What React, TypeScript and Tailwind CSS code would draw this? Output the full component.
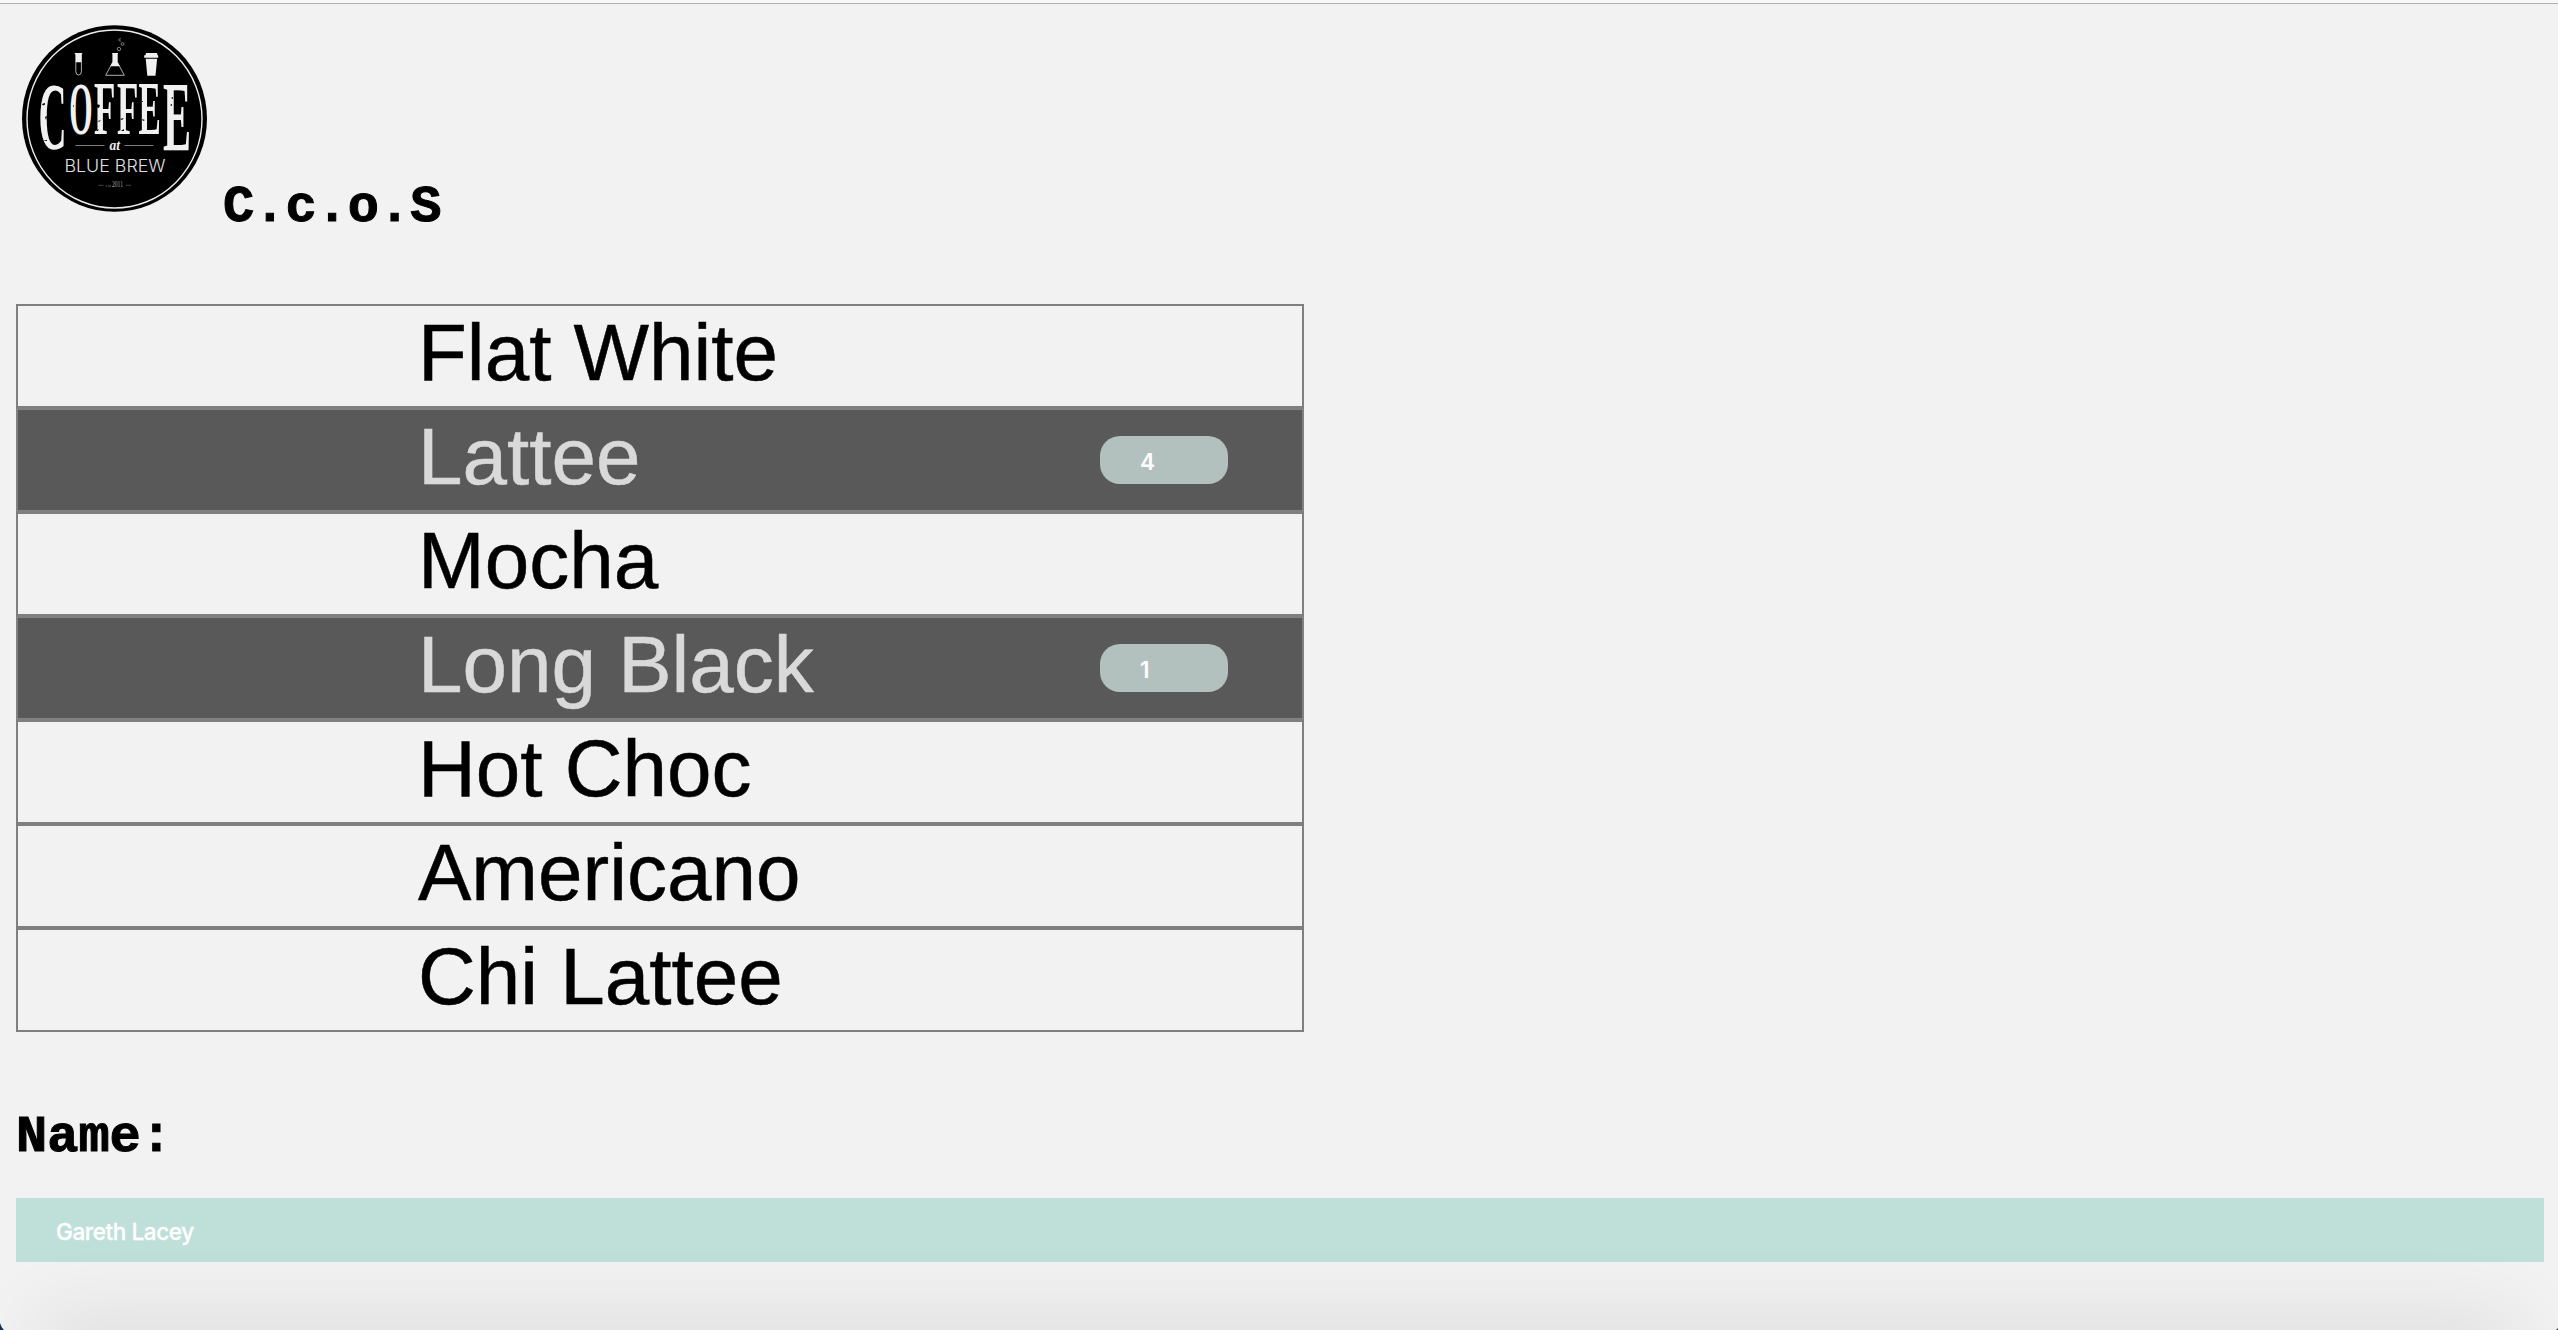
const drinks: { name: string; qty?: number }[] = [
  { name: "Flat White" },
  { name: "Lattee", qty: 4 },
  { name: "Mocha" },
  { name: "Long Black", qty: 1 },
  { name: "Hot Choc" },
  { name: "Americano" },
  { name: "Chi Lattee" },
];

// Condensed letters of the wordmark
const letters = [
  { c: "C", x: 38.6, sx: 0.405, size: 96, y: 149.3 },
  { c: "O", x: 69.3, sx: 0.4, size: 75, y: 134.3 },
  { c: "F", x: 94, sx: 0.46, size: 76, y: 134.3 },
  { c: "F", x: 117, sx: 0.46, size: 76, y: 134.3 },
  { c: "E", x: 138.5, sx: 0.44, size: 76, y: 134.3 },
  { c: "E", x: 163, sx: 0.42, size: 100, y: 150 },
];

function Logo() {
  return (
    <svg className="block h-[200px] w-[200px] shrink-0" viewBox="14 18 200 200" fill="none">
      <ellipse cx="114.5" cy="118.5" rx="92.5" ry="93.3" fill="#000" />
      <ellipse cx="114.5" cy="119" rx="87.5" ry="89" stroke="#ececec" strokeWidth="1.4" />
      <g stroke="#d8d8d8" strokeWidth="0.8">
        <path d="M75.8 54V71.5a2.8 3.5 0 0 0 5.6 0V54" />
        <path d="M112.8 54v8L105.7 75.3h18.6L117.3 62v-8" />
        <g stroke="#999">
          <circle cx="119" cy="49" r="1.7" />
          <circle cx="122.6" cy="44" r="1.4" />
          <path d="M121 39.2a1.2 1.2 0 1 0 0 1.4" />
        </g>
      </g>
      <g fill="#f1f1f1">
        <path d="M74.6 53h7.6v1.2h-.8v8h-5.6v-8h-.8z" />
        <path d="M112.2 53h5.8v1h-.7v8l2.6 4.2h-9.7L112.8 62v-8h-.6z" />
        <path d="M146 53h11l.6 2.2h.6v2.6H144.2v-2.6h1.2z" />
        <path d="M145.7 58.8h11.4l-1.6 17h-8.2z" />
      </g>
      <g fill="#f1f1f1" fontFamily="Liberation Serif, serif" fontWeight="700">
        {letters.map((l, i) => (
          <text key={i} fontSize={l.size} transform={`translate(${l.x} ${l.y}) scale(${l.sx} 1)`}>
            {l.c}
          </text>
        ))}
      </g>
      <path
        d="M42 104l3-1v1.5l-2 1zM45 117l2-1-1 4zM42 141l5-1v1zM96 104l4 1-1 3-3-1zM98 121l3-1-2 2zM120 119l4-1-2 2zM121 131l3-2v2zM141 101h2v1zM142 119l3 1-2 1zM171 98l2-1v2zM170 105l2-1v2zM73 106l1-1v2zM96 131l3-2-1 2z"
        fill="#000"
      />
      <path d="M75.5 145.5H104.5M124.5 145.5H153.5" stroke="#8a8a8a" strokeWidth="0.9" />
      <path d="M98.5 185.3h5M126 185.3h5" stroke="#555" strokeWidth="0.8" />
      <text x="109.5" y="150" fill="#f1f1f1" fontFamily="Liberation Serif, serif" fontStyle="italic" fontWeight="700" fontSize="15" textLength="10.5" lengthAdjust="spacingAndGlyphs">at</text>
      <text x="64.5" y="172" fill="#e0e0e0" fontFamily="Inter, sans-serif" fontWeight="300" fontSize="17.6" textLength="101" lengthAdjust="spacingAndGlyphs">BLUE BREW</text>
      <text x="105.5" y="186.5" fill="#777" fontFamily="Liberation Serif, serif" fontSize="5">est</text>
      <text x="112" y="187" fill="#aaa" fontFamily="Liberation Serif, serif" fontSize="9" textLength="11" lengthAdjust="spacingAndGlyphs">2011</text>
    </svg>
  );
}

export default function App() {
  return (
    <div className="relative flex h-[1330px] w-full flex-col overflow-hidden bg-[#f2f2f2] text-black">
      <div className="h-1 shrink-0 border-b border-[#b0b0b0] bg-[#f8f8f8]" />
      <header className="flex h-[231px] shrink-0 items-start pt-3.5 pl-3.5">
        <Logo />
        <h1 className="mt-[160px] ml-[9px] font-['Liberation_Mono',monospace] text-[52px] leading-[60px] font-bold [-webkit-text-stroke:1px_black]">
          C.c.o.S
        </h1>
      </header>
      <ul className="mt-[69px] ml-4 w-[1288px] shrink-0">
        {drinks.map((d) => (
          <li
            key={d.name}
            className={`flex h-[104px] items-center border-2 border-[#808080] pl-[400px] font-['Liberation_Sans',Arial,sans-serif] ${
              d.qty ? "bg-[#595959] text-[#d9d9d9]" : "text-black"
            }`}
          >
            <span className="w-[682px] pb-[7px] text-[80px] leading-[92px] [-webkit-text-stroke:0.5px_currentColor]">
              {d.name}
            </span>
            {d.qty && (
              <span className="flex h-12 w-32 items-center rounded-[20px] bg-[#b3c1be] pt-1 pl-10 font-[Inter,sans-serif] text-[22.5px] leading-none font-semibold text-white">
                {d.qty}
              </span>
            )}
          </li>
        ))}
      </ul>
      <h2 className="mt-[76px] ml-4 font-['Liberation_Mono',monospace] text-[52px] leading-[60px] font-bold [-webkit-text-stroke:1px_black]">
        Name:
      </h2>
      <div className="mt-[30px] mr-3.5 ml-4 flex h-16 shrink-0 items-center bg-[#bfe0d8] pt-1 pl-10 font-[Inter,sans-serif] text-[22.5px] leading-none font-medium tracking-[-0.4px] text-white [-webkit-text-stroke:0.3px_white]">
        Gareth Lacey
      </div>
      <div className="pointer-events-none absolute inset-x-0 bottom-0 h-[100px] overflow-hidden">
        <div className="absolute inset-x-[50px] top-[100px] h-10 shadow-[0_0_80px_10px_rgba(0,0,0,0.1)]" />
      </div>
      <svg className="absolute bottom-0 left-0 h-[7px] w-1" viewBox="0 0 4 7">
        <path d="M0 0Q1 4 4 7H0z" fill="#1b2f5c" />
      </svg>
      <svg className="absolute right-0 bottom-0 h-0.5 w-0.5" viewBox="0 0 2 2">
        <path d="M2 0V2H0z" fill="#333" />
      </svg>
    </div>
  );
}
